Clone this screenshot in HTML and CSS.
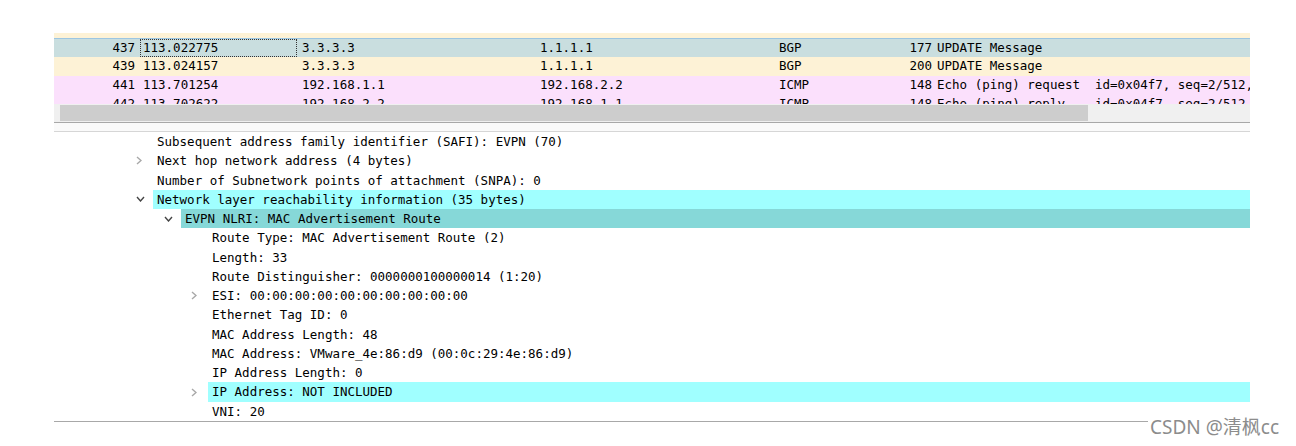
FILE: index.html
```html
<!DOCTYPE html>
<html lang="en">
<head>
    <meta charset="UTF-8">
    <title>Wireshark - EVPN</title>
    <link rel="stylesheet" href="styles.css">
</head>
<body>
    <div class="pane">
        <!-- packet list -->
        <div class="packet-list">
            <div class="prow bgp-yellow partial"></div>
            <div class="prow selected">
                <span class="c-no">437</span><span class="c-time focus">113.022775</span><span class="c-src">3.3.3.3</span><span class="c-dst">1.1.1.1</span><span class="c-proto">BGP</span><span class="c-len">177</span><span class="c-info">UPDATE Message</span>
            </div>
            <div class="prow bgp-yellow">
                <span class="c-no">439</span><span class="c-time">113.024157</span><span class="c-src">3.3.3.3</span><span class="c-dst">1.1.1.1</span><span class="c-proto">BGP</span><span class="c-len">200</span><span class="c-info">UPDATE Message</span>
            </div>
            <div class="prow icmp">
                <span class="c-no">441</span><span class="c-time">113.701254</span><span class="c-src">192.168.1.1</span><span class="c-dst">192.168.2.2</span><span class="c-proto">ICMP</span><span class="c-len">148</span><span class="c-info">Echo (ping) request  id=0x04f7, seq=2/512, ttl=63 (reply in 442)</span>
            </div>
            <div class="prow icmp">
                <span class="c-no">442</span><span class="c-time">113.702622</span><span class="c-src">192.168.2.2</span><span class="c-dst">192.168.1.1</span><span class="c-proto">ICMP</span><span class="c-len">148</span><span class="c-info">Echo (ping) reply    id=0x04f7, seq=2/512, ttl=63 (request in 441)</span>
            </div>
        </div>
        <div class="hscroll"><div class="thumb"></div></div>
        <div class="splitter"></div>

        <!-- packet details tree -->
        <div class="tree">
            <div class="trow lvl0"><span class="tog"></span><span class="label">Subsequent address family identifier (SAFI): EVPN (70)</span></div>
            <div class="trow lvl0"><span class="tog"><svg width="6" height="9" viewBox="0 0 6 9"><polyline points="1,1 5,4.5 1,8" class="arrow light"/></svg></span><span class="label">Next hop network address (4 bytes)</span></div>
            <div class="trow lvl0"><span class="tog"></span><span class="label">Number of Subnetwork points of attachment (SNPA): 0</span></div>
            <div class="trow lvl0"><span class="tog"><svg width="9" height="6" viewBox="0 0 9 6"><polyline points="1,1 4.5,5 8,1" class="arrow"/></svg></span><span class="label hl">Network layer reachability information (35 bytes)</span></div>
            <div class="trow lvl1"><span class="tog"><svg width="9" height="6" viewBox="0 0 9 6"><polyline points="1,1 4.5,5 8,1" class="arrow"/></svg></span><span class="label sel">EVPN NLRI: MAC Advertisement Route</span></div>
            <div class="trow lvl2"><span class="tog"></span><span class="label">Route Type: MAC Advertisement Route (2)</span></div>
            <div class="trow lvl2"><span class="tog"></span><span class="label">Length: 33</span></div>
            <div class="trow lvl2"><span class="tog"></span><span class="label">Route Distinguisher: 0000000100000014 (1:20)</span></div>
            <div class="trow lvl2"><span class="tog"><svg width="6" height="9" viewBox="0 0 6 9"><polyline points="1,1 5,4.5 1,8" class="arrow light"/></svg></span><span class="label">ESI: 00:00:00:00:00:00:00:00:00:00</span></div>
            <div class="trow lvl2"><span class="tog"></span><span class="label">Ethernet Tag ID: 0</span></div>
            <div class="trow lvl2"><span class="tog"></span><span class="label">MAC Address Length: 48</span></div>
            <div class="trow lvl2"><span class="tog"></span><span class="label">MAC Address: VMware_4e:86:d9 (00:0c:29:4e:86:d9)</span></div>
            <div class="trow lvl2"><span class="tog"></span><span class="label">IP Address Length: 0</span></div>
            <div class="trow lvl2"><span class="tog"><svg width="6" height="9" viewBox="0 0 6 9"><polyline points="1,1 5,4.5 1,8" class="arrow light"/></svg></span><span class="label hl">IP Address: NOT INCLUDED</span></div>
            <div class="trow lvl2"><span class="tog"></span><span class="label">VNI: 20</span></div>
        </div>
        <div class="bottom-line"></div>
    </div>

    <div class="watermark">CSDN @清枫cc</div>
</body>
</html>
```

FILE: styles.css
```css
/* General styles */
body {
    margin: 0;
    padding: 0;
    background-color: #fff;
    font-family: "DejaVu Sans Mono", "Liberation Mono", monospace;
    font-size: 12.5px;
    color: #000;
    height: 446px;
    overflow: hidden;
    position: relative;
}
.pane {
    margin-left: 54px;
    width: 1196px;
    padding-top: 33px;
}

/* Packet list */
.packet-list {
    height: 71px;
    overflow: hidden;
}
.prow {
    display: flex;
    height: 19px;
    line-height: 18px;
    white-space: pre;
    box-sizing: border-box;
}
.prow.partial {
    height: 5px;
}
.bgp-yellow {
    background-color: #fdf2d6;
}
.icmp {
    background-color: #fbe0fc;
}
.selected {
    background-color: #c9dedf;
    border-top: 1px solid #9cc6e2;
    line-height: 17px;
}
.prow span {
    flex: none;
    overflow: hidden;
    box-sizing: border-box;
}
.c-no {
    width: 86px;
    text-align: right;
    padding-right: 5px;
}
.c-time {
    width: 157px;
    padding-left: 3px;
}
.c-time.focus {
    outline: 1px dotted #333;
    outline-offset: -1px;
}
.c-src {
    width: 238px;
    padding-left: 5px;
}
.c-dst {
    width: 239px;
    padding-left: 5px;
}
.c-proto {
    width: 96px;
    padding-left: 5px;
}
.c-len {
    width: 63px;
    text-align: right;
    padding-right: 1px;
}
.prow .c-info {
    flex: 1;
    padding-left: 4px;
}

/* Horizontal scrollbar */
.hscroll {
    height: 18px;
    background-color: #f0f0f0;
    padding: 1px 0 1px 6px;
    box-sizing: border-box;
}
.hscroll .thumb {
    width: 1028px;
    height: 100%;
    background-color: #cdcdcd;
}
.splitter {
    height: 8px;
    border-top: 1px solid #a8a8a8;
    border-bottom: 1px solid #d6d6d6;
    background-color: #fafafa;
}

/* Details tree */
.tree {
    height: 289px;
}
.trow {
    display: flex;
    height: 19.27px;
    line-height: 19px;
    white-space: pre;
}
.trow.lvl0 {
    padding-left: 79px;
}
.trow.lvl1 {
    padding-left: 107px;
}
.trow.lvl2 {
    padding-left: 134px;
}
.tog {
    width: 20px;
    flex: none;
    display: flex;
    align-items: center;
    padding-left: 3px;
    box-sizing: border-box;
}
.arrow {
    fill: none;
    stroke: #444;
    stroke-width: 1.4;
}
.arrow.light {
    stroke: #a8a8a8;
}
.label {
    flex: 1;
    padding-left: 4px;
}
.label.hl {
    background-color: #a0ffff;
}
.label.sel {
    background-color: #86d8d8;
}
.bottom-line {
    height: 0;
    border-top: 1px solid #a8a8a8;
}

.watermark {
    position: absolute;
    left: 1148px;
    top: 415px;
    padding: 0 2px;
    background-color: #fff;
    font-family: "Noto Sans", "Noto Sans CJK SC", sans-serif;
    font-size: 19px;
    color: #8c8c8c;
    line-height: 24px;
}
```
